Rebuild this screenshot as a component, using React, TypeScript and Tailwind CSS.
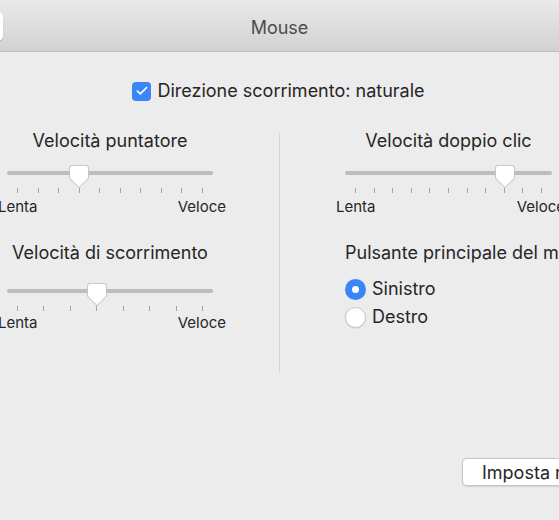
import { Check } from "lucide-react";

const font = { fontFamily: "Inter, 'Noto Sans', sans-serif" };

interface SliderProps {
  ticks: number;
  value: number; // tick index the thumb sits on
  tight?: boolean;
}

function Thumb() {
  return (
    <svg width="22" height="25" viewBox="0 0 22 25" className="block">
      <path
        d="M4 1.5 H18 Q20.5 1.5 20.5 4 V14 L11 23.5 L1.5 14 V4 Q1.5 1.5 4 1.5 Z"
        fill="#ffffff"
        stroke="#c4c4c4"
        strokeWidth="0.8"
      />
    </svg>
  );
}

function Slider({ ticks, value, tight }: SliderProps) {
  const frac = value / (ticks - 1);
  return (
    <div className="w-full">
      <div className="relative h-[22px]">
        <div className="absolute left-0 right-0 top-[5px] h-[4px] rounded-full bg-[#bdbdbd]" />
        <div
          className="absolute top-[-2px] drop-shadow-[0_0.5px_0.5px_rgba(0,0,0,0.25)]"
          style={{ left: `calc(${frac} * (100% - 20px) - 1px)` }}
        >
          <Thumb />
        </div>
      </div>
      <div className="flex justify-between px-[10px]">
        {Array.from({ length: ticks }).map((_, i) => (
          <span key={i} className="block h-[5px] w-px bg-[#a3a3a3]" />
        ))}
      </div>
      <div
        className={
          tight
            ? "-ml-[9px] -mr-[13px] mt-[3px] flex justify-between text-[15px] leading-[18px] text-[#262626]"
            : "-ml-[9px] -mr-[13px] mt-[5px] flex justify-between text-[15px] leading-[18px] text-[#262626]"
        }
      >
        <span>Lenta</span>
        <span>Veloce</span>
      </div>
    </div>
  );
}

function SliderBlock({
  title,
  ticks,
  value,
  gap,
}: {
  title: string;
  ticks: number;
  value: number;
  gap: "sm" | "lg";
}) {
  return (
    <div className="flex flex-col items-center">
      <div className="whitespace-nowrap text-[18px] leading-[22px] text-[#262626]">{title}</div>
      <div className={gap === "sm" ? "mt-[14px] w-full" : "mt-[20px] w-full"}>
        <Slider ticks={ticks} value={value} tight={gap === "lg"} />
      </div>
    </div>
  );
}

function Radio({ label, checked }: { label: string; checked?: boolean }) {
  return (
    <div className="flex items-center gap-[6px]">
      {checked ? (
        <span className="flex h-[21px] w-[21px] items-center justify-center rounded-full bg-[#3a86f7]">
          <span className="h-[7px] w-[7px] rounded-full bg-white" />
        </span>
      ) : (
        <span className="h-[21px] w-[21px] rounded-full border border-[#c9c9c9] bg-white shadow-[0_0.5px_1px_rgba(0,0,0,0.15)]" />
      )}
      <span className="text-[18px] leading-[22px] text-[#262626]">{label}</span>
    </div>
  );
}

export default function App() {
  return (
    <div className="relative h-[520px] w-[559px] overflow-hidden bg-[#ececec]" style={font}>
      <div className="flex h-[52px] items-center border-b border-[#bebebe] bg-gradient-to-b from-[#e9e9e9] to-[#d2d2d2]">
        <div className="-ml-[27px] h-[30px] w-[30px] rounded-[5px] bg-white shadow-[0_0.5px_1px_rgba(0,0,0,0.2)]" />
        <div className="flex-1 pr-[3px] pt-[3px] text-center text-[18px] text-[#4b4b4b]">Mouse</div>
      </div>

      <div className="mt-[28px] flex items-center justify-center gap-[6px] pr-[2px]">
        <span className="flex h-[19px] w-[19px] items-center justify-center rounded-[4px] bg-[#3a86f7]">
          <Check className="h-[14px] w-[14px] text-white" strokeWidth={3} />
        </span>
        <span className="text-[18px] leading-[22px] text-[#262626]">Direzione scorrimento: naturale</span>
      </div>

      <div className="mt-[28px] flex">
        <div className="ml-[7px] w-[206px] shrink-0">
          <SliderBlock title="Velocità puntatore" ticks={10} value={3} gap="sm" />
          <div className="mt-[26px]">
            <SliderBlock title="Velocità di scorrimento" ticks={8} value={3} gap="lg" />
          </div>
        </div>

        <div className="ml-[66px] mt-[3px] h-[240px] w-px shrink-0 bg-[#d3d3d3]" />

        <div className="ml-[65px] w-[207px] shrink-0">
          <SliderBlock title="Velocità doppio clic" ticks={11} value={8} gap="sm" />
          <div className="mt-[26px] whitespace-nowrap">
            <div className="text-[18px] leading-[22px] text-[#262626]">Pulsante principale del mouse</div>
            <div className="mt-[14px] flex flex-col gap-[6px]">
              <Radio label="Sinistro" checked />
              <Radio label="Destro" />
            </div>
          </div>
        </div>
      </div>

      <div className="absolute left-[462px] top-[458px] flex h-[28px] items-center whitespace-nowrap rounded-[5px] border border-[#c8c8c8] bg-white pl-[19px] pr-[20px] text-[18px] text-[#262626] shadow-[0_0.5px_1px_rgba(0,0,0,0.12)]">
        Imposta mouse Bluetooth…
      </div>
    </div>
  );
}
